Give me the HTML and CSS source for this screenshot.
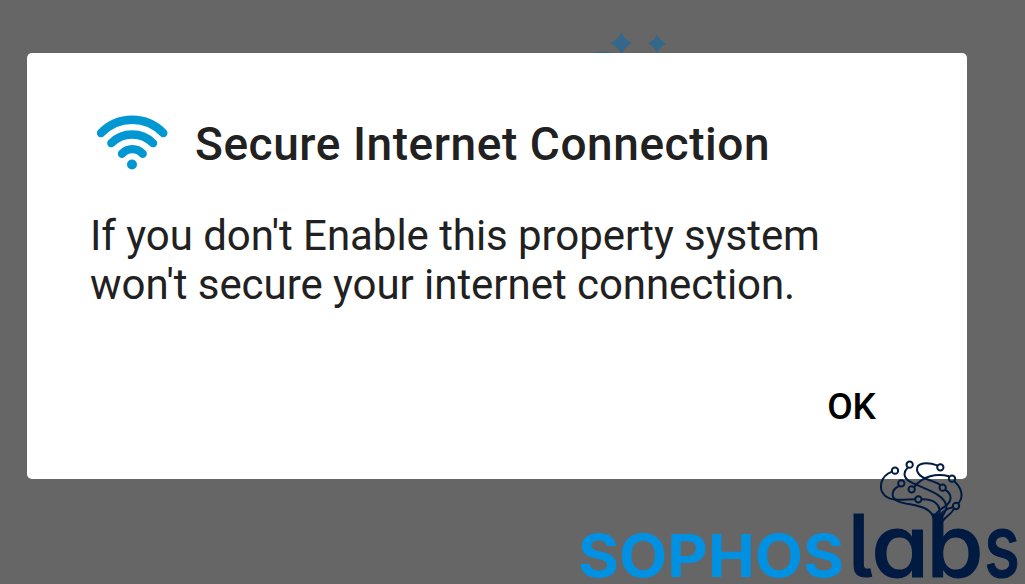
FILE: index.html
```html
<!DOCTYPE html>
<html lang="en">
<head>
  <meta charset="UTF-8">
  <title>Secure Internet Connection</title>
  <link rel="stylesheet" href="styles.css">
</head>
<body>

  <svg class="sparkles" viewBox="0 0 300 120">
    <ellipse cx="66" cy="107" rx="38" ry="12" fill="#2f6b85"/>
    <path d="M124 36 Q134 61 158 70 Q134 79 124 105 Q114 79 90 70 Q114 61 124 36Z"/>
    <path d="M231 43 Q239 63 258 71 Q239 79 231 99 Q223 79 204 71 Q223 63 231 43Z"/>
  </svg>

  <div class="dialog">
    <div class="dialog-header">
      <svg class="wifi" viewBox="30 40 222 170">
        <path d="M48 97 A129 129 0 0 1 235 97"/>
        <path d="M79 127 A88 88 0 0 1 204 127"/>
        <path d="M111 159 A41 41 0 0 1 173 159"/>
        <circle cx="141" cy="191" r="15"/>
      </svg>
      <h1>Secure Internet Connection</h1>
    </div>
    <p class="message">If you don't Enable this property system<br>won't secure your internet connection.</p>
    <div class="actions">
      <button class="ok">OK</button>
    </div>
  </div>

  <svg class="logo" viewBox="0 0 1380 402">
    <text class="sophos" x="39" y="381" textLength="798" lengthAdjust="spacingAndGlyphs">SOPHOS</text>
    <text class="labs" y="381"><tspan x="848">l</tspan><tspan x="919" textLength="174" lengthAdjust="spacingAndGlyphs">a</tspan><tspan x="1084" textLength="172" lengthAdjust="spacingAndGlyphs">b</tspan><tspan x="1257" textLength="108" lengthAdjust="spacingAndGlyphs">s</tspan></text>
    <g class="brain">
      <path d="M981 65 C946 78 938 117 960 137 C982 155 1018 148 1050 148"/>
      <path d="M1071 148 C1106 147 1126 163 1124 188 C1120 204 1114 210 1114 232"/>
      <path d="M1002 108 C978 119 976 145 1000 154 C1035 168 1102 163 1107 210 V232"/>
      <path d="M1028 53 C1009 73 1021 90 1045 100 C1085 119 1138 133 1144 168 C1146 194 1119 203 1118 232"/>
      <path d="M1117 46 C1087 35 1054 37 1056 60 C1060 88 1110 91 1126 105"/>
      <path d="M1048 111 C1073 78 1115 69 1152 79"/>
      <path d="M1168 94 C1192 116 1196 141 1180 160"/>
      <path d="M1141 119 C1163 135 1161 154 1140 169 C1117 184 1108 193 1107 212"/>
      <path d="M1163 172 C1136 179 1116 197 1115 228"/>
      <path d="M1166 177 C1158 198 1128 202 1124 235"/>
      <circle cx="990" cy="62" r="9.5"/>
      <circle cx="1034" cy="44" r="9.5"/>
      <circle cx="1126" cy="52" r="9.5"/>
      <circle cx="1161" cy="86" r="9.5"/>
      <circle cx="1009" cy="100" r="9.5"/>
      <circle cx="1040" cy="118" r="9.5"/>
      <circle cx="1133" cy="113" r="9.5"/>
      <circle cx="1060" cy="148" r="9.5"/>
      <circle cx="1173" cy="168" r="9.5"/>
    </g>
  </svg>

</body>
</html>
```
FILE: styles.css
```css
body {
  margin: 0;
  height: 584px;
  box-sizing: border-box;
  padding: 53px 58px 0 27px;
  background: #666;
  font-family: Roboto, sans-serif;
  overflow: hidden;
}

.sparkles {
  position: absolute;
  left: 580px;
  top: 20px;
  width: 100px;
  height: 40px;
  fill: #33688a;
}

.dialog {
  position: relative;
  box-sizing: border-box;
  height: 426px;
  padding: 60px 63px 0;
  background: #fff;
  border-radius: 5px;
}

.dialog-header {
  display: flex;
  align-items: center;
  height: 62px;
}

.wifi {
  width: 74px;
  height: 57px;
  margin: 0 26px 4px 5px;
  fill: none;
  stroke: #0097d3;
  stroke-width: 25;
  stroke-linecap: round;
}

.wifi circle {
  fill: #0097d3;
  stroke: none;
}

h1 {
  margin: 0;
  font-size: 46px;
  font-weight: 500;
  letter-spacing: 0.56px;
  color: #212121;
  white-space: nowrap;
}

.message {
  margin: 36px 0 0;
  font-size: 42px;
  line-height: 49px;
  letter-spacing: -0.05px;
  color: #212121;
  white-space: nowrap;
}

.actions {
  display: flex;
  justify-content: flex-end;
  padding: 76px 28px 0 0;
}

.ok {
  padding: 0;
  border: none;
  background: none;
  font: 500 37px/44px Roboto, sans-serif;
  color: #000;
}

.logo {
  position: absolute;
  left: 565px;
  top: 450px;
  width: 460px;
  height: 134px;
  font-family: Inter, sans-serif;
}

.sophos {
  font-size: 178px;
  font-weight: 700;
  fill: #0091e2;
}

.labs {
  font-size: 260px;
  font-weight: 500;
  font-feature-settings: "cv11", "cv05", "ss02";
  fill: #001a41;
  stroke: #001a41;
  stroke-width: 3;
}

.brain {
  fill: none;
  stroke: #001a41;
  stroke-width: 6;
}
```
